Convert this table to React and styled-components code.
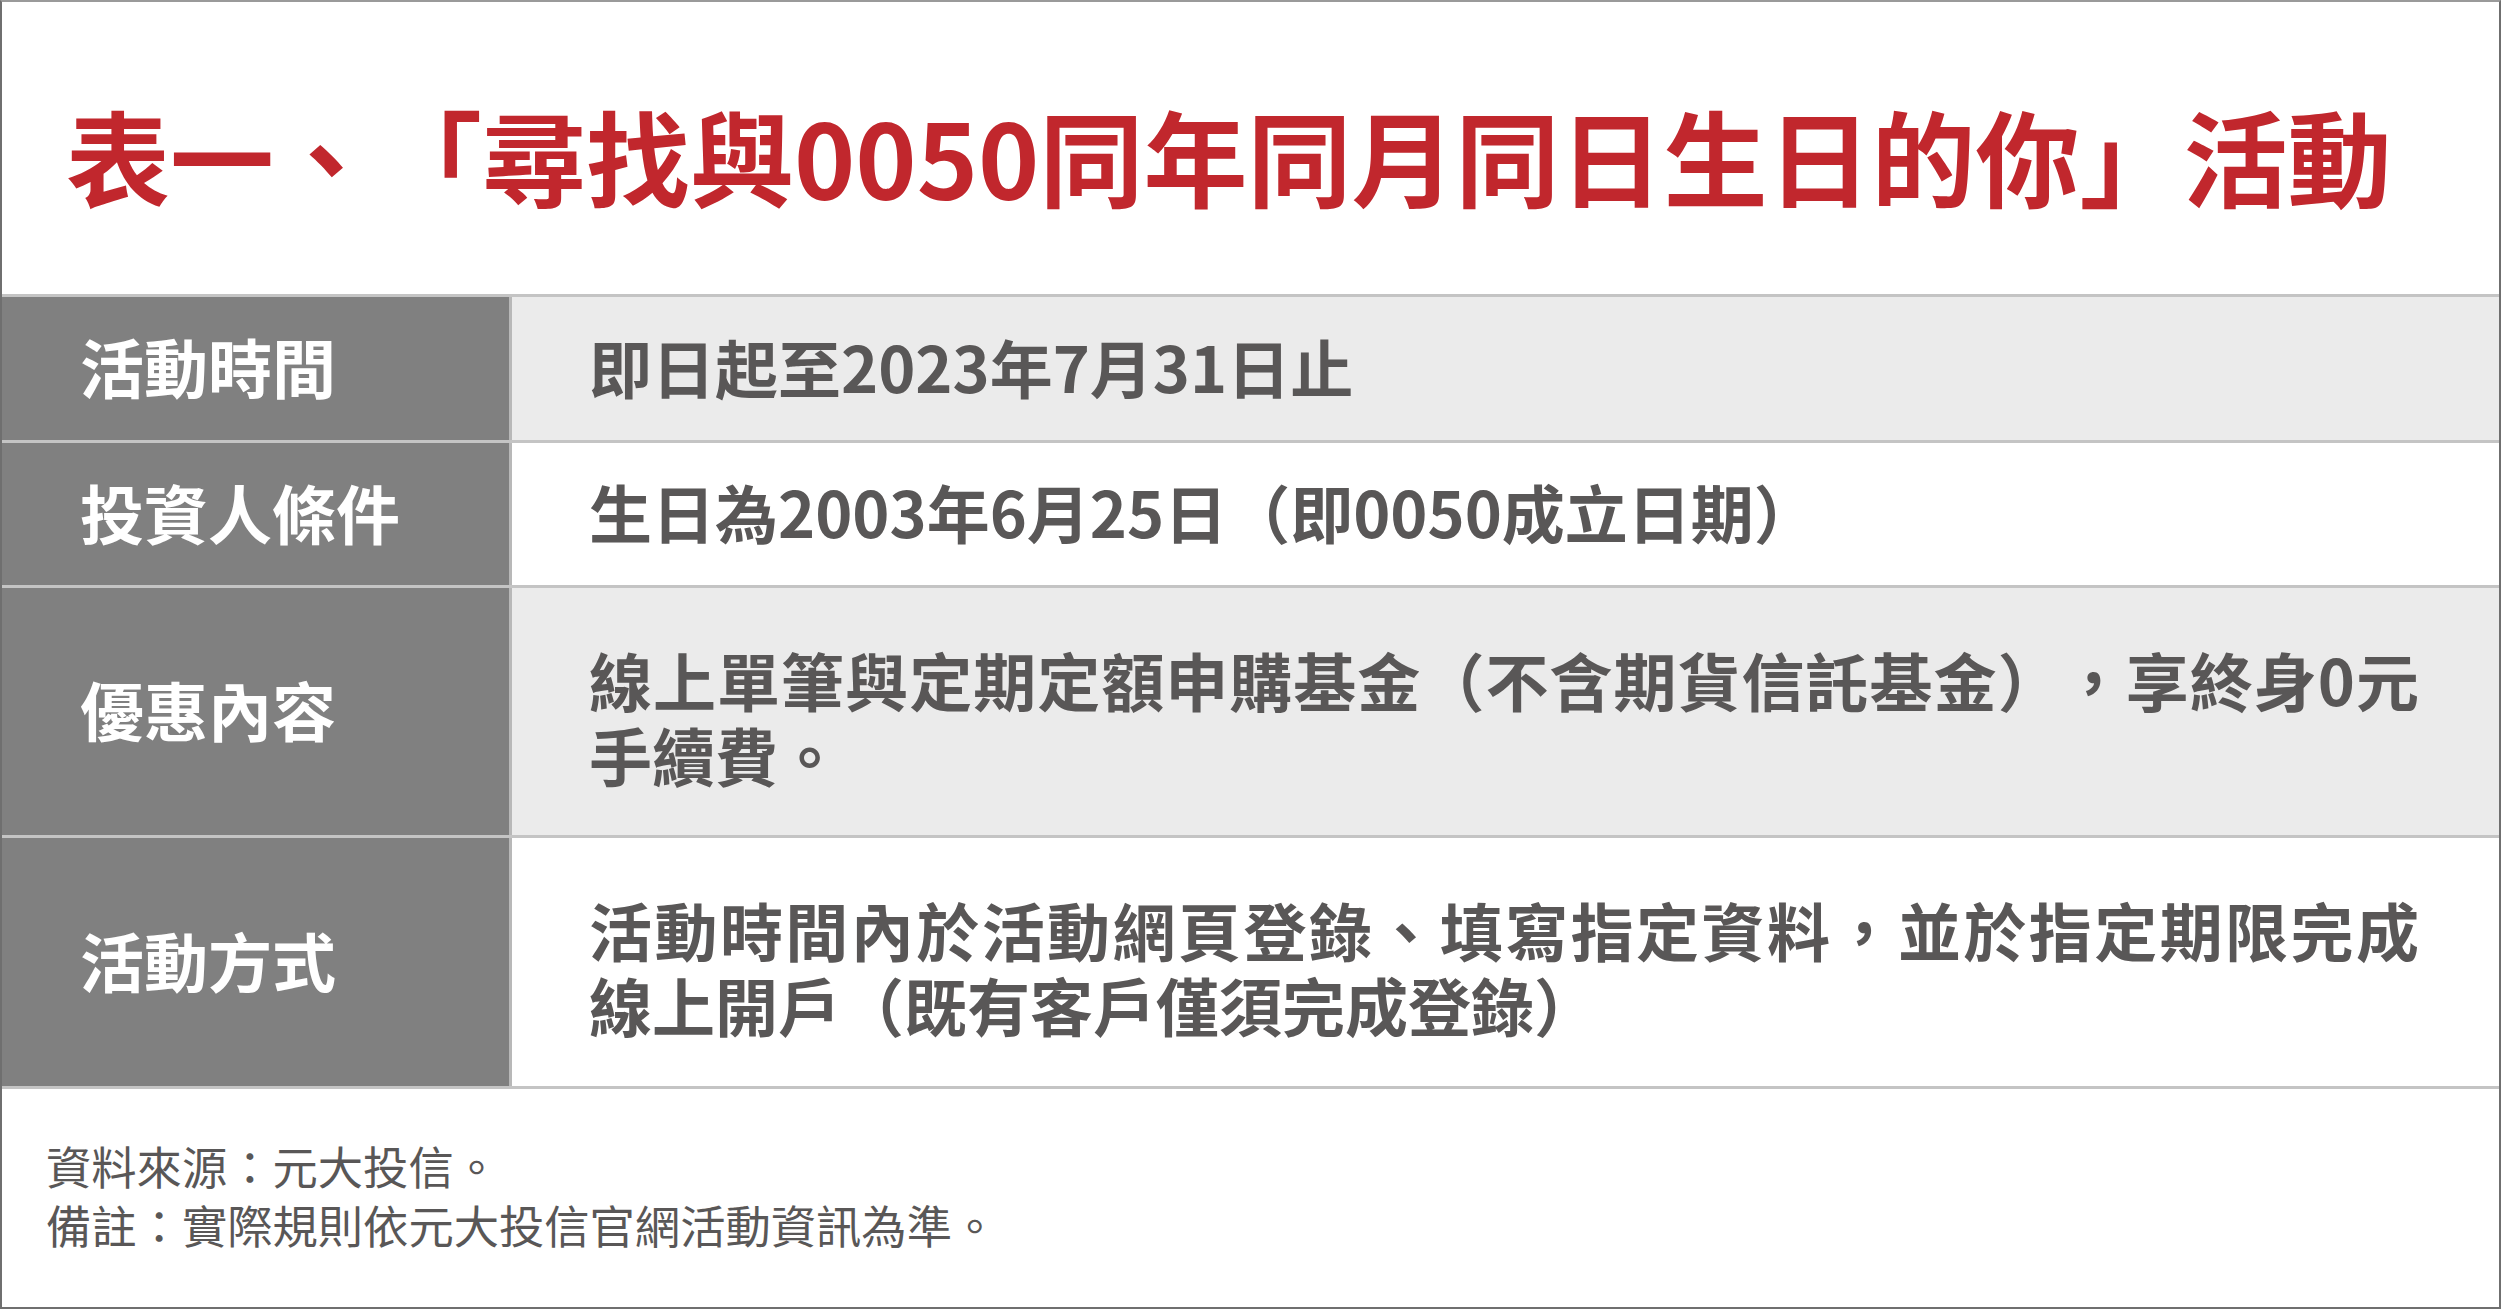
import styled, { createGlobalStyle } from "styled-components";

const GlobalStyle = createGlobalStyle`
  html, body {
    margin: 0;
    padding: 0;
    background: #ffffff;
  }
  * {
    box-sizing: border-box;
  }
`;

const Frame = styled.div`
  width: 2501px;
  height: 1309px;
  border: 2px solid #6f6f6f;
  border-top-color: #9a9a9a;
  background: #ffffff;
  display: flex;
  flex-direction: column;
  font-family: "Noto Sans CJK TC", "Noto Sans CJK SC", sans-serif;
  text-spacing-trim: space-all;
`;

const TitleBar = styled.div`
  height: 292px;
  flex-shrink: 0;
  display: flex;
  align-items: center;
  padding: 14px 0 0 64px;
`;

const Title = styled.h1`
  margin: 0;
  font-size: 104px;
  line-height: 1;
  font-weight: 700;
  color: #c1272d;
  white-space: nowrap;
`;

const Table = styled.div`
  flex-shrink: 0;
  border-top: 3px solid #c4c4c4;
  display: flex;
  flex-direction: column;
`;

const Row = styled.div`
  display: grid;
  grid-template-columns: 510px 1fr;
  height: ${(p) => p.$h}px;
  border-bottom: 3px solid #c4c4c4;
`;

const Label = styled.div`
  background: #808080;
  border-right: 3px solid #b8b8b8;
  color: #ffffff;
  font-size: 64px;
  font-weight: 700;
  line-height: 75px;
  display: flex;
  align-items: center;
  padding: 0 0 6px 78px;
  white-space: nowrap;
`;

const Cell = styled.div`
  background: ${(p) => (p.$shade ? "#ebebeb" : "#ffffff")};
  color: #595757;
  font-size: 63px;
  font-weight: 700;
  line-height: 75px;
  display: flex;
  align-items: center;
  padding: ${(p) => p.$pt}px 80px ${(p) => p.$pb}px 77px;
`;

const Lines = styled.div`
  width: 100%;
`;

const Line = styled.div`
  white-space: nowrap;
  text-align: ${(p) => (p.$justify ? "justify" : "left")};
  text-align-last: ${(p) => (p.$justify ? "justify" : "left")};
  text-justify: inter-character;
`;

const Footer = styled.div`
  flex: 1;
  display: flex;
  flex-direction: column;
  justify-content: center;
  padding: 0 0 6px 44px;
  color: #595757;
  font-size: 45.3px;
  font-weight: 400;
  line-height: 59px;
`;

const rows = [
  { label: "活動時間", h: 146, shade: true, pt: 0, pb: 7, text: ["即日起至2023年7月31日止"] },
  { label: "投資人條件", h: 145, shade: false, pt: 0, pb: 7, text: ["生日為2003年6月25日（即0050成立日期）"] },
  {
    label: "優惠內容",
    h: 250,
    shade: true,
    pt: 8,
    pb: 0,
    text: ["線上單筆與定期定額申購基金（不含期貨信託基金），享終身0元", "手續費。"],
  },
  {
    label: "活動方式",
    h: 251,
    shade: false,
    pt: 8,
    pb: 0,
    text: ["活動時間內於活動網頁登錄、填寫指定資料，並於指定期限完成", "線上開戶（既有客戶僅須完成登錄）"],
  },
];

function App() {
  return (
    <>
      <GlobalStyle />
      <Frame lang="zh-Hant">
        <TitleBar>
          <Title>表一、「尋找與0050同年同月同日生日的你」活動</Title>
        </TitleBar>
        <Table>
          {rows.map((r) => (
            <Row key={r.label} $h={r.h}>
              <Label>{r.label}</Label>
              <Cell $shade={r.shade} $pt={r.pt} $pb={r.pb}>
                <Lines>
                  {r.text.map((line, i) => (
                    <Line key={i} $justify={i < r.text.length - 1}>
                      {line}
                    </Line>
                  ))}
                </Lines>
              </Cell>
            </Row>
          ))}
        </Table>
        <Footer>
          <div>資料來源：元大投信。</div>
          <div>備註：實際規則依元大投信官網活動資訊為準。</div>
        </Footer>
      </Frame>
    </>
  );
}

export default App;
